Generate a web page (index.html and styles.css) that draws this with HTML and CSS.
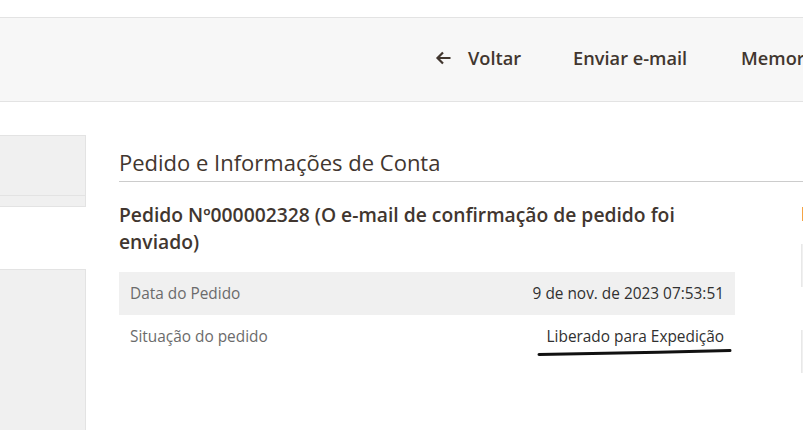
FILE: index.html
```html
<!DOCTYPE html>
<html lang="pt-BR">
<head>
<meta charset="utf-8">
<title>Pedido</title>
<link rel="stylesheet" href="styles.css">
</head>
<body>
<div class="page">
  <div class="topstrip"></div>
  <header class="actions">
    <div class="actions-inner">
      <button class="action back">
        <svg class="arrow" width="16" height="14" viewBox="0 0 16 14"><path d="M15.5 7H2.5M8 1.5L2.5 7L8 12.5" fill="none" stroke="#41362f" stroke-width="2.2"/></svg>
        <span>Voltar</span>
      </button>
      <button class="action">Enviar e-mail</button>
      <button class="action memo">Memorando de crédito</button>
    </div>
  </header>
  <div class="content">
    <aside class="sidebar">
      <div class="side-box">
        <div class="side-box-top"></div>
      </div>
      <div class="side-box tall"></div>
    </aside>
    <main class="main">
      <h2 class="section-title">Pedido e Informações de Conta</h2>
      <div class="columns">
        <section class="order">
          <h3 class="order-title">Pedido Nº000002328 (O e-mail de confirmação de pedido foi enviado)</h3>
          <table class="info">
            <tr class="shade"><th>Data do Pedido</th><td>9 de nov. de 2023 07:53:51</td></tr>
            <tr><th>Situação do pedido</th><td><span class="status">Liberado para Expedição<svg class="scribble" width="196" height="10" viewBox="0 0 196 10"><path d="M2 7.5 C 60 6.5, 130 5, 193 3.5" fill="none" stroke="#111" stroke-width="3" stroke-linecap="round"/></svg></span></td></tr>
          </table>
        </section>
        <section class="account">
          <div class="acc-mark"></div>
          <div class="acc-box"></div>
          <div class="acc-box second"></div>
        </section>
      </div>
    </main>
  </div>
</div>
</body>
</html>
```
FILE: styles.css
```css
* { box-sizing: border-box; }
html, body { margin: 0; padding: 0; }
body {
  font-family: "Open Sans", "Noto Sans", sans-serif;
  color: #41362f;
  background: #fff;
  width: 803px;
  height: 430px;
  overflow: hidden;
}
.page { width: 803px; height: 430px; overflow: hidden; }
.topstrip { height: 17px; }
.actions {
  height: 85px;
  background: #f7f7f7;
  border-top: 1px solid #e3e3e3;
  border-bottom: 1px solid #e3e3e3;
  overflow: hidden;
}
.actions-inner {
  display: flex;
  align-items: center;
  height: 100%;
  padding-left: 409px;
  padding-bottom: 3px;
  white-space: nowrap;
  width: 1300px;
}
.action {
  font-family: "Open Sans", sans-serif;
  font-size: 18.2px;
  font-weight: 600;
  color: #41362f;
  background: none;
  border: 0;
  padding: 0 26px;
  margin: 0;
  display: flex;
  align-items: center;
  line-height: 24px;
}
.action.back .arrow { margin-right: 17px; }
.action.memo { padding-left: 28px; }
.content {
  display: flex;
  margin-top: 33px;
}
.sidebar {
  width: 86px;
  flex: none;
  display: flex;
  flex-direction: column;
  gap: 62px;
}
.side-box {
  background: #f0f0f0;
  border: 1px solid #e3e3e3;
  border-left: 0;
  height: 72px;
}
.side-box-top {
  height: 60px;
  border-bottom: 1px solid #e3e3e3;
}
.side-box.tall { height: 200px; }
.main {
  flex: 1;
  margin-left: 33px;
  min-width: 0;
}
.section-title {
  margin: 12px 0 0;
  font-size: 22px;
  font-weight: 400;
  line-height: 30px;
  color: #41362f;
  padding-bottom: 4px;
  border-bottom: 1px solid #cccccc;
  width: 720px;
}
.columns {
  display: flex;
  gap: 66px;
}
.order { width: 616px; flex: none; }
.order-title {
  margin: 19px 0 0;
  font-size: 19.3px;
  font-weight: 600;
  line-height: 27px;
  color: #41362f;
}
.info {
  margin-top: 17px;
  width: 100%;
  border-collapse: collapse;
  font-size: 15.4px;
}
.info th, .info td {
  height: 43px;
  padding: 0 11px;
  line-height: 21px;
  vertical-align: middle;
}
.info th {
  text-align: left;
  font-weight: 400;
  color: #6b6b6b;
}
.info td {
  text-align: right;
  color: #303030;
}
.info tr.shade { background: #f0f0f0; }
.status { position: relative; display: inline-block; }
.scribble {
  position: absolute;
  left: -10px;
  top: 21px;
}
.account {
  flex: 1;
  padding-top: 25px;
  display: flex;
  flex-direction: column;
}
.acc-mark {
  width: 2px;
  height: 14px;
  background: #f5a445;
  margin-left: 1px;
}
.acc-box {
  margin-top: 23px;
  height: 43px;
  background: #f0f0f0;
  border-left: 1px solid #e8e8e8;
}
.acc-box.second { margin-top: 43px; }
```
